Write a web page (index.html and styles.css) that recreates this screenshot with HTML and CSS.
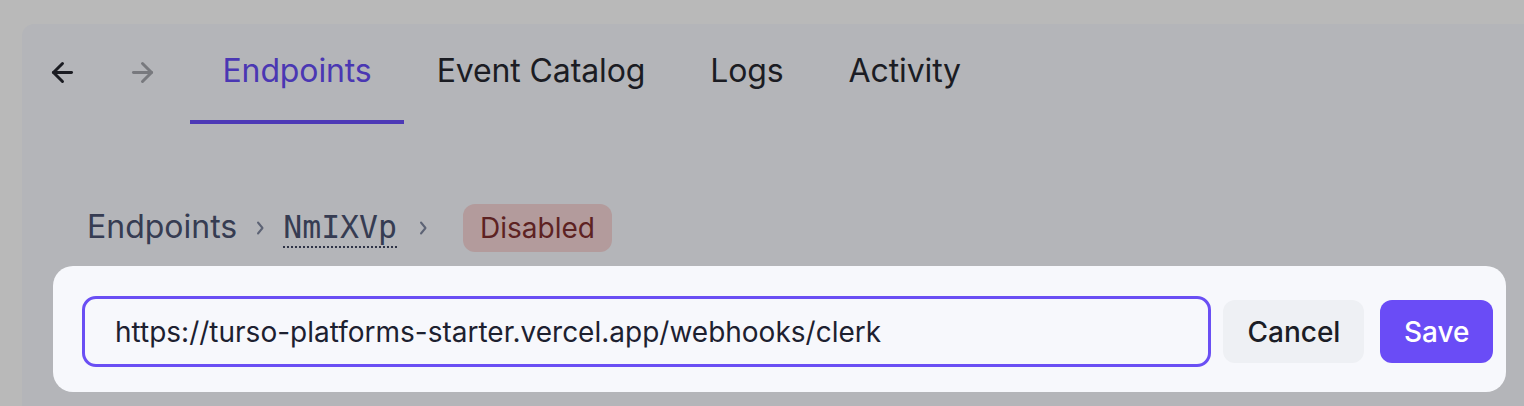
FILE: index.html
```html
<!DOCTYPE html>
<html lang="en">
<head>
<meta charset="utf-8">
<title>Endpoint</title>
<link rel="stylesheet" href="styles.css">
</head>
<body>
<div class="panel">
  <nav class="tabbar">
    <div class="history">
      <svg class="hist-icon back" viewBox="0 0 24 24" width="31" height="31" fill="none" stroke="currentColor" stroke-width="2.3" stroke-linecap="round" stroke-linejoin="round"><path d="M19 12H5"/><path d="M12 19l-7-7 7-7"/></svg>
      <svg class="hist-icon fwd" viewBox="0 0 24 24" width="31" height="31" fill="none" stroke="currentColor" stroke-width="2.3" stroke-linecap="round" stroke-linejoin="round"><path d="M5 12h14"/><path d="M12 5l7 7-7 7"/></svg>
    </div>
    <div class="tabs">
      <a class="tab active">Endpoints</a>
      <a class="tab">Event Catalog</a>
      <a class="tab">Logs</a>
      <a class="tab">Activity</a>
    </div>
  </nav>

  <div class="crumbs">
    <span class="crumb">Endpoints</span>
    <svg class="chev" viewBox="0 0 10 14" width="10" height="14" fill="none" stroke="currentColor" stroke-width="2" stroke-linecap="round" stroke-linejoin="round"><path d="M3 1.5 L7.5 7 L3 12.5"/></svg>
    <span class="crumb mono">NmIXVp</span>
    <svg class="chev chev2" viewBox="0 0 10 14" width="10" height="14" fill="none" stroke="currentColor" stroke-width="2" stroke-linecap="round" stroke-linejoin="round"><path d="M3 1.5 L7.5 7 L3 12.5"/></svg>
    <span class="badge">Disabled</span>
  </div>

  <div class="card">
    <div class="url-input">https://turso-platforms-starter.vercel.app/webhooks/clerk</div>
    <button class="btn btn-cancel">Cancel</button>
    <button class="btn btn-save">Save</button>
  </div>
</div>
</body>
</html>
```

FILE: styles.css
```css
* { box-sizing: border-box; }

html, body {
  margin: 0;
  padding: 0;
  height: 100%;
}

body {
  background: #b9b9b9;
  font-family: Inter, "Noto Sans", sans-serif;
  overflow: hidden;
}

.panel {
  margin: 24px 0 0 22px;
  height: calc(100% - 24px);
  background: #b4b5b9;
  border-radius: 12px 0 0 0;
}

.tabbar {
  display: flex;
  align-items: flex-start;
  height: 100px;
}

.history {
  display: flex;
  align-items: center;
  gap: 49px;
  height: 100px;
  padding-left: 25px;
  padding-bottom: 4px;
}

.hist-icon { display: block; }
.back { color: #1b1c22; }
.fwd { color: #78797e; }

.tabs {
  display: flex;
  margin-left: 32px;
}

.tab {
  display: block;
  font-size: 32px;
  line-height: 48px;
  letter-spacing: -0.12px;
  padding: 23px 32.5px 25px;
  color: #1b1c23;
  border-bottom: 4px solid transparent;
  cursor: pointer;
}

.tab.active {
  color: #4a37b3;
  border-bottom-color: #4d39b6;
}

.crumbs {
  display: flex;
  align-items: center;
  height: 48px;
  margin-top: 80px;
  padding-left: 65px;
  color: #363c52;
}

.crumb {
  font-size: 32px;
  line-height: 44px;
  position: relative;
  top: -1px;
}

.mono {
  font-family: "DejaVu Sans Mono", "Liberation Mono", monospace;
  font-size: 31.5px;
  text-decoration: underline dotted #2f3447;
  text-decoration-thickness: 2px;
  text-underline-offset: 8px;
}

.chev {
  display: block;
  color: #5d6375;
  margin: 0 18px 0 18px;
}

.chev2 { margin: 0 35px 0 21px; }

.badge {
  display: block;
  font-size: 28px;
  line-height: 34px;
  padding: 7px 17px;
  background: #b39b9c;
  color: #5d2222;
  border-radius: 12px;
}

.card {
  display: flex;
  align-items: center;
  margin: 14px 0 0 31px;
  width: 1453px;
  height: 126px;
  padding: 30px 13px 25px 29px;
  background: #f7f8fc;
  border-radius: 20px;
}

.url-input {
  flex: 1;
  height: 71px;
  display: flex;
  align-items: center;
  padding: 0 30px;
  border: 3px solid #6a4ff4;
  border-radius: 14px;
  background: #f7f8fc;
  color: #1d2130;
  font-size: 28px;
  white-space: nowrap;
}

.btn {
  height: 63px;
  border: none;
  border-radius: 12px;
  padding: 0 24px;
  font-family: Inter, "Noto Sans", sans-serif;
  font-size: 28px;
  font-weight: 500;
  cursor: pointer;
}

.btn-cancel {
  margin-left: 12px;
  background: #eef0f4;
  color: #1b1d26;
}

.btn-save {
  margin-left: 16px;
  padding: 0 23.5px;
  background: #6a4cf6;
  color: #ffffff;
}
```
